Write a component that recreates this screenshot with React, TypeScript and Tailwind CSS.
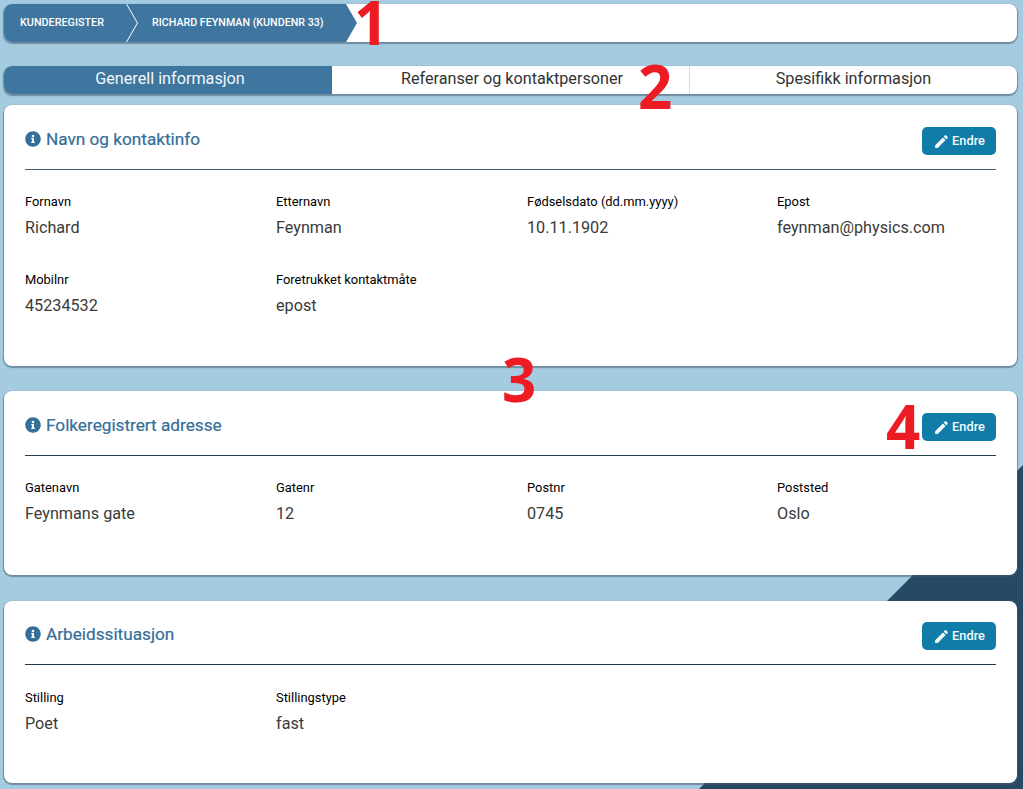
import { FaInfoCircle } from 'react-icons/fa';
import { MdEdit } from 'react-icons/md';

interface Field {
  label: string;
  value: string;
}

interface InfoCardProps {
  title: string;
  rows: Field[][];
  lineClass: string;
  cardClass: string;
  bodyClass?: string;
}

function InfoCard({ title, rows, lineClass, cardClass, bodyClass = 'pt-[23px]' }: InfoCardProps) {
  return (
    <section className={`rounded-lg bg-white px-[21px] shadow-[0_1px_1px_1px_rgba(70,90,110,0.55)] ${cardClass}`}>
      <div className={`flex h-[43px] items-start justify-between border-b ${lineClass}`}>
        <h2 className="flex h-7 items-center gap-[5px] pb-[3px] text-[17.2px] text-[#356e98] [-webkit-text-stroke:0.2px_#356e98]">
          <FaInfoCircle size={16} className="mt-[-2px]" />
          {title}
        </h2>
        <button className="flex h-7 w-[74px] items-center justify-center gap-[2px] rounded-[5px] bg-[#0f7da7] text-[12.8px] font-medium text-[#f4fafc]">
          <MdEdit size={17} />
          Endre
        </button>
      </div>
      <div className={`flex flex-col gap-[32px] ${bodyClass}`}>
        {rows.map((row, i) => (
          <div key={i} className="grid grid-cols-[251px_251px_250px_1fr]">
            {row.map((f) => (
              <div key={f.label}>
                <div className="h-[18px] text-[12.9px] leading-[18px] text-black">{f.label}</div>
                <div className="mt-[6px] text-[16.2px] leading-[22px] text-[#3a3a3a]">{f.value}</div>
              </div>
            ))}
          </div>
        ))}
      </div>
    </section>
  );
}

function Marker({ className, children }: { className: string; children: string }) {
  return (
    <span className={`absolute text-[60px] leading-[44px] font-bold text-[#ed1c24] [font-family:'Open_Sans',sans-serif] ${className}`}>
      {children}
    </span>
  );
}

export default function App() {
  return (
    <div className="relative h-[789px] w-[1023px] overflow-hidden bg-[#a4cbe0] font-['Roboto',sans-serif]">
      {/* diagonal backdrop */}
      <div className="absolute inset-0 bg-[#264a66] [clip-path:polygon(1023px_465px,1023px_789px,699px_789px)]" />

      <div className="relative flex flex-col pt-1 pr-[6px] pl-1">
        {/* breadcrumb */}
        <nav className="flex h-[38px] overflow-hidden rounded-lg bg-white shadow-[0_1px_1px_1px_rgba(70,90,110,0.55)]">
          <a className="z-10 mr-[-10px] flex w-[133px] items-center bg-[#3e76a0] pl-4 text-[10.8px] font-medium text-white [clip-path:polygon(0_0,122px_0,133px_50%,122px_100%,0_100%)]">
            KUNDEREGISTER
          </a>
          <a className="flex w-[230px] items-center bg-[#3e76a0] pl-[25px] text-[10.7px] font-medium text-white [clip-path:polygon(0_0,219px_0,230px_50%,219px_100%,0_100%,11px_50%)]">
            RICHARD FEYNMAN (KUNDENR 33)
          </a>
        </nav>

        {/* tabs */}
        <div className="mt-6 flex h-[28px] overflow-hidden rounded-lg bg-white text-[16.2px] shadow-[0_1px_1px_1px_rgba(70,90,110,0.55)]">
          <div className="flex w-[328px] items-center justify-center bg-[#3e76a0] pb-px pl-1 text-[#f2f7fa]">Generell informasjon</div>
          <div className="flex w-[358px] items-center justify-center border-r border-[#d5d9dc] pb-px pl-[3px] text-[#333]">Referanser og kontaktpersoner</div>
          <div className="flex flex-1 items-center justify-center pb-px text-[#333]">Spesifikk informasjon</div>
        </div>

        {/* cards */}
        <div className="mt-[11px] flex flex-col gap-[25px]">
          <InfoCard
            title="Navn og kontaktinfo"
            cardClass="h-[261px] pt-[22px]"
            lineClass="border-[#3e6274]"
            rows={[
              [
                { label: 'Fornavn', value: 'Richard' },
                { label: 'Etternavn', value: 'Feynman' },
                { label: 'Fødselsdato (dd.mm.yyyy)', value: '10.11.1902' },
                { label: 'Epost', value: 'feynman@physics.com' },
              ],
              [
                { label: 'Mobilnr', value: '45234532' },
                { label: 'Foretrukket kontaktmåte', value: 'epost' },
              ],
            ]}
          />
          <InfoCard
            title="Folkeregistrert adresse"
            cardClass="h-[184px] pt-[22px]"
            lineClass="border-[#22404f]"
            rows={[
              [
                { label: 'Gatenavn', value: 'Feynmans gate' },
                { label: 'Gatenr', value: '12' },
                { label: 'Postnr', value: '0745' },
                { label: 'Poststed', value: 'Oslo' },
              ],
            ]}
          />
          <InfoCard
            title="Arbeidssituasjon"
            cardClass="h-[182px] mt-px pt-[21px]"
            lineClass="border-[#1d3a4e]"
            bodyClass="pt-[24px]"
            rows={[
              [
                { label: 'Stilling', value: 'Poet' },
                { label: 'Stillingstype', value: 'fast' },
              ],
            ]}
          />
        </div>
      </div>

      <Marker className="left-[354px] top-0">1</Marker>
      <Marker className="left-[638px] top-[64px]">2</Marker>
      <Marker className="left-[502px] top-[357px]">3</Marker>
      <Marker className="left-[886px] top-[404px]">4</Marker>
    </div>
  );
}
